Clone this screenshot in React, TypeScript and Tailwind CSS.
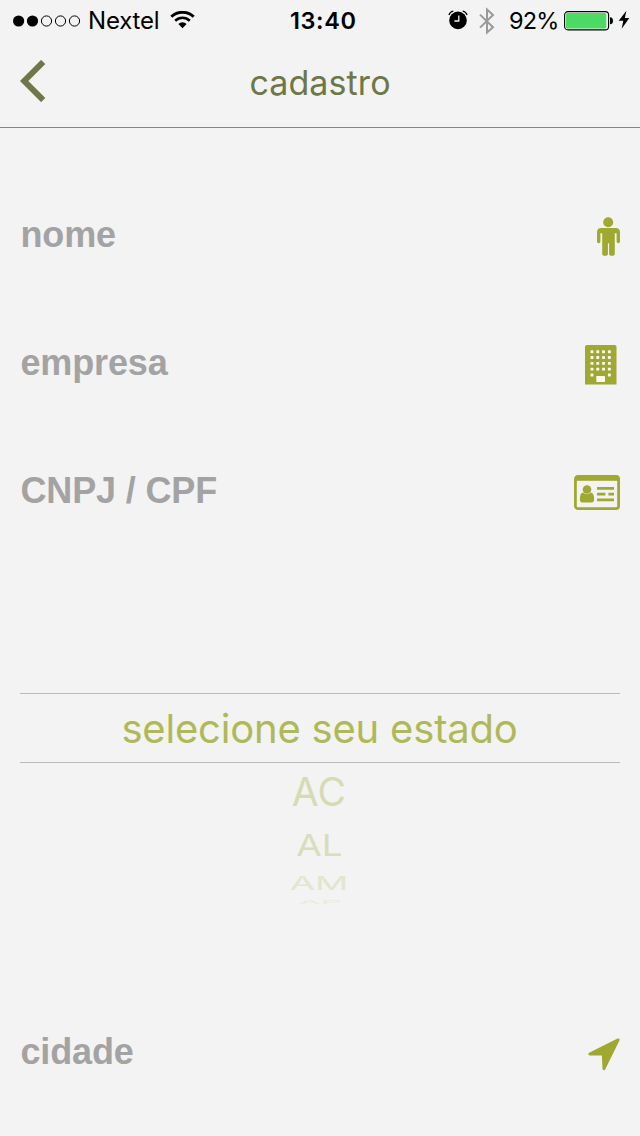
import type { ReactNode } from "react";

const olive = "#9fa830";

function SignalDots() {
  return (
    <svg width="68" height="12" viewBox="0 0 68 12">
      <circle cx="5.6" cy="6" r="5.6" />
      <circle cx="19.5" cy="6" r="5.6" />
      {[33.5, 47.5, 61.5].map((cx) => (
        <circle key={cx} cx={cx} cy="6" r="5.1" fill="none" stroke="#000" strokeWidth="1" />
      ))}
    </svg>
  );
}

function WifiIcon() {
  return (
    <svg width="25" height="18" viewBox="0 0 25 18" fill="none" stroke="#000">
      <path d="M1.3 5.8A16 16 0 0 1 23.7 5.8" strokeWidth="2.8" />
      <path d="M5.2 9.7A10.4 10.4 0 0 1 19.8 9.7" strokeWidth="2.6" />
      <path d="M8.4 13A5.8 5.8 0 0 1 16.6 13L12.5 17.3Z" fill="#000" stroke="none" />
    </svg>
  );
}

function AlarmIcon() {
  return (
    <svg width="20" height="20" viewBox="0 0 20 20" fill="none" stroke="#000">
      <circle cx="10" cy="10.4" r="8.8" fill="#000" stroke="none" />
      <path d="M.9 5Q2 1.8 5.3 1.2M14.7 1.2Q18 1.8 19.1 5" strokeWidth="1.3" />
      <path d="M10.8 5.4V11H6.4" stroke="#f3f3f3" strokeWidth="1.3" />
    </svg>
  );
}

function BluetoothIcon() {
  return (
    <svg width="16" height="28" viewBox="0 0 16 28" fill="none" stroke="#999" strokeWidth="2">
      <path d="M1 7.6L14 20.2L8 25.6V2.6L14 8L1 20.6" />
    </svg>
  );
}

function BatteryIcon() {
  return (
    <svg width="50" height="20" viewBox="0 0 50 20">
      <rect x=".6" y=".6" width="44" height="18.3" rx="3.4" fill="none" stroke="#000" strokeWidth="1.1" />
      <rect x="2" y="2" width="40.3" height="15.5" rx="1.6" fill="#4cd964" />
      <path d="M46 6.3Q49 6.3 49 9.8T46 13.2Z" />
    </svg>
  );
}

function BoltIcon() {
  return (
    <svg width="12" height="20" viewBox="0 0 12 20">
      <path d="M8.4.7L.7 10.8H5.3L3.7 18.8L11.3 8H6.8Z" />
    </svg>
  );
}

function PersonIcon() {
  return (
    <svg width="24" height="39" viewBox="0 0 24 39" fill={olive}>
      <circle cx="12.2" cy="5.2" r="5" />
      <path d="M5.2 11H19.5Q24 11 24 15.3V24.5Q24 26.3 22.3 26.3Q20.6 26.3 20.6 24.5V16.2H18.8V37Q18.8 38.8 17 38.8H14.9Q13.1 38.8 13.1 37V26.2H11.9V37Q11.9 38.8 10.1 38.8H8Q6.2 38.8 6.2 37V16.2H4.4V24.5Q4.4 26.3 2.7 26.3Q1 26.3 1 24.5V15.3Q1 11 5.2 11Z" />
    </svg>
  );
}

function BuildingIcon() {
  const columns = [5.5, 11.3, 17.1, 22.9];
  const rows = [5.3, 11.1, 16.9, 22.7, 28.5];
  return (
    <svg width="32" height="40" viewBox="0 0 32 40">
      <path d="M0 39.5V2Q0 0 2 0H29.5Q31.5 0 31.5 2V39.5Z" fill={olive} />
      {rows.map((y, row) =>
        columns
          .filter((_, column) => row < 4 || column === 0 || column === 3)
          .map((x) => <rect key={`${x}-${y}`} x={x} y={y} width="2.9" height="2.9" rx=".4" fill="#fafaf0" />),
      )}
      <rect x="11.3" y="31" width="8.7" height="6" rx=".4" fill="#fafaf0" />
    </svg>
  );
}

function CardIcon() {
  return (
    <svg width="46" height="35" viewBox="0 0 46 35" fill={olive}>
      <rect x="1.4" y="1.4" width="43.2" height="32.2" rx="2.6" fill="none" stroke={olive} strokeWidth="2.8" />
      <rect x="1.5" y="1" width="43" height="4.8" />
      <circle cx="13" cy="14.5" r="4.3" />
      <path d="M8.9 17.6Q13 21 17.1 17.6Q20.1 18.4 20.1 24.2Q20.1 27.4 17.5 27.4H8.5Q5.9 27.4 5.9 24.2Q5.9 18.4 8.9 17.6Z" />
      <path d="M23 12H40V14.7H23ZM23 17.7H31.4V20.4H23ZM34.4 17.7H40V20.4H34.4ZM23 23.5H40V26.2H23Z" />
    </svg>
  );
}

function LocationIcon() {
  return (
    <svg width="32" height="33" viewBox="0 0 32 33" fill={olive} stroke={olive} strokeWidth="2.8" strokeLinejoin="round">
      <path d="M30.2 1.8L1.8 16H15.2L15.9 30.8Z" />
    </svg>
  );
}

function Field({ label, icon }: { label: string; icon: ReactNode }) {
  return (
    <label className="flex h-32 items-center justify-between px-5">
      <span className="pt-px pl-[0.5px] font-['Liberation_Sans',sans-serif] text-[36px]/[40px] font-bold tracking-[-0.15px] text-[#a3a3a3]">
        {label}
      </span>
      <span className="pt-[5px]">{icon}</span>
    </label>
  );
}

function StatePicker() {
  return (
    <section className="mx-5 mt-[138px] flex h-[294px] flex-col items-center overflow-hidden text-[#9fa830]">
      <div className="flex h-[70px] w-full items-center justify-center border-y border-[#bababa]">
        <span className="pt-px pr-px text-[40px] leading-none tracking-[-0.2px] whitespace-nowrap text-[#afb958]">
          selecione seu estado
        </span>
      </div>
      <div className="flex h-[56px] items-center pr-[2px] text-[39px] leading-none tracking-[0.3px] text-[#d6dbb1]">AC</div>
      <div className="flex h-[51px] items-center pr-[1px] leading-none text-[#d9deba]">
        <span className="scale-y-[0.82] text-[37px]">AL</span>
      </div>
      <div className="flex h-[27px] items-center pr-[2px] leading-none text-[#e3e6cf]">
        <span className="scale-y-[0.49] text-[37px] tracking-[-0.3px]">AM</span>
      </div>
      <div className="flex h-[9px] items-center leading-none text-[#e9ebdc]">
        <span className="scale-y-[0.14] text-[34px]">AP</span>
      </div>
    </section>
  );
}

export default function App() {
  return (
    <div className="h-[1136px] w-[640px] overflow-hidden bg-[#f3f3f3] font-['Inter',sans-serif]">
      <div className="flex h-10 items-center pl-[13px] text-2xl leading-none text-black">
        <span className="pt-px"><SignalDots /></span>
        <span className="ml-[7px] w-[72px] pt-[2px] text-[24px] tracking-[-0.2px]">Nextel</span>
        <span className="ml-[10px]"><WifiIcon /></span>
        <span className="ml-[95px] w-[68px] pt-[2px] text-[23.5px] font-semibold tracking-[0.6px]">13:40</span>
        <span className="ml-[90px]"><AlarmIcon /></span>
        <span className="ml-[11px] pt-px"><BluetoothIcon /></span>
        <span className="ml-[14px] w-[50px] pt-[2px] text-[23.5px] tracking-[-0.8px]">92%</span>
        <span className="ml-[5px] pt-px"><BatteryIcon /></span>
        <span className="ml-[4px]"><BoltIcon /></span>
      </div>
      <header className="grid h-[88px] grid-cols-[1fr_auto_1fr] items-center border-b border-[#858585] px-5 text-[#6d7747]">
        <button aria-label="Voltar" className="pb-[5px]">
          <svg width="26" height="42" viewBox="0 0 26 42" fill="none" stroke="#6d7747" strokeWidth="6">
            <path d="M23.2 2L4.2 21L23.2 40" />
          </svg>
        </button>
        <h1 className="pb-px text-[34px] leading-none tracking-[0.1px]">cadastro</h1>
      </header>
      <main className="pt-[42px]">
        <Field label="nome" icon={<PersonIcon />} />
        <Field label="empresa" icon={<span className="block pr-[3px]"><BuildingIcon /></span>} />
        <Field label="CNPJ / CPF" icon={<CardIcon />} />
        <div className="pt-px">
          <StatePicker />
        </div>
        <Field label="cidade" icon={<span className="block pt-px"><LocationIcon /></span>} />
      </main>
    </div>
  );
}
